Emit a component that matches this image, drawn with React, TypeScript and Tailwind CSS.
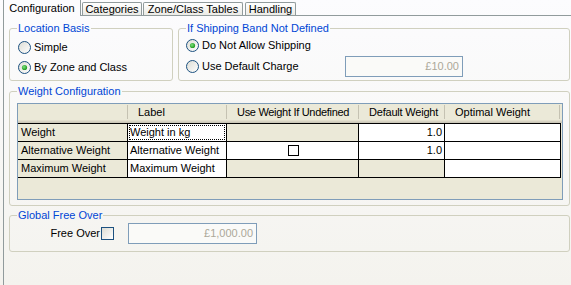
import { useId } from "react";

// XP style radio
function Radio({ checked }: { checked?: boolean }) {
  const id = useId();
  return (
    <svg width="13" height="13" viewBox="0 0 13 13" className="shrink-0">
      <defs>
        <linearGradient id={id + "bg"} x1="0" y1="0" x2="1" y2="1">
          <stop offset="0" stopColor="#dcdcd4" />
          <stop offset="1" stopColor="#ffffff" />
        </linearGradient>
        <radialGradient id={id + "dot"} cx="0.4" cy="0.4" r="0.6">
          <stop offset="0" stopColor="#7de07d" />
          <stop offset="1" stopColor="#1f9a1f" />
        </radialGradient>
      </defs>
      <circle cx="6.5" cy="6.5" r="6" fill={`url(#${id}bg)`} stroke="#1c5180" strokeWidth="1" />
      {checked && <circle cx="6.5" cy="6.5" r="2.6" fill={`url(#${id}dot)`} />}
    </svg>
  );
}

function Group({ title, className, children }: { title: string; className?: string; children: React.ReactNode }) {
  return (
    <fieldset className={`m-0 min-w-0 rounded-[3px] border border-[#d0d0bf] pl-[7px] ${className ?? ""}`}>
      <legend className="px-[1px] text-[#0046d5] leading-[13px]">{title}</legend>
      {children}
    </fieldset>
  );
}

function Disabled({ value, className }: { value: string; className?: string }) {
  return (
    <div className={`flex h-[21px] items-center justify-end border border-[#7f9db9] bg-[#fafaf8] pr-[3px] text-[#aca899] ${className ?? ""}`}>
      {value}
    </div>
  );
}

const cols = [
  { name: "", w: "w-[110px]", t: "" },
  { name: "Label", w: "w-[99px]", t: "" },
  { name: "Use Weight If Undefined", w: "w-[132px]", t: "tracking-[-0.3px]" },
  { name: "Default Weight", w: "w-[86px]", t: "tracking-[-0.2px]" },
  { name: "Optimal Weight", w: "w-[115px]", t: "" },
];

const white = "bg-white";
const gray = "bg-[#ebe9d8]";

export default function App() {
  return (
    <div className="h-[285px] w-[571px] overflow-hidden bg-gradient-to-b from-[#fcfcfe] to-[#f4f3ee] pl-[3px] font-['Liberation_Sans',Arial,sans-serif] text-[11px] leading-[13px] text-black">
      {/* Tabs */}
      <div className="flex h-[15px] items-start">
        <div className="relative z-10 flex h-[16px] w-[78px] items-center justify-center border-x border-[#919b9c] bg-[#fcfcfe] pt-[1px]">
          Configuration
        </div>
        <div className="ml-[1px] mt-[2px] flex h-[13px] w-[60px] items-center justify-center rounded-t-[2px] border-x border-t border-[#919b9c] bg-gradient-to-b from-white to-[#ecebe6]">
          Categories
        </div>
        <div className="ml-[1px] mt-[2px] flex h-[13px] w-[100px] items-center justify-center rounded-t-[2px] border-x border-t border-[#919b9c] bg-gradient-to-b from-white to-[#ecebe6]">
          Zone/Class Tables
        </div>
        <div className="ml-[2px] mt-[2px] flex h-[13px] w-[51px] items-center justify-center rounded-t-[2px] border-x border-t border-[#919b9c] bg-gradient-to-b from-white to-[#ecebe6]">
          Handling
        </div>
      </div>

      {/* Panel */}
      <div className="h-[270px] w-[590px] border-l border-t border-[#919b9c] px-[5px] pt-[6px]">
        <div className="flex w-[561px] gap-[5px]">
          <Group title="Location Basis" className="h-[59px] w-[164px]">
            <div className="flex flex-col gap-[7px] pl-[1px] pt-[6px]">
              <label className="flex items-center gap-[3px]">
                <Radio /> Simple
              </label>
              <label className="flex items-center gap-[3px]">
                <Radio checked /> By Zone and Class
              </label>
            </div>
          </Group>
          <Group title="If Shipping Band Not Defined" className="h-[59px] w-[392px]">
            <div className="flex flex-col pt-[4px]">
              <label className="flex h-[13px] items-center gap-[3px]">
                <Radio checked /> Do Not Allow Shipping
              </label>
              <div className="mt-[4px] flex items-center">
                <label className="flex w-[159px] items-center gap-[3px]">
                  <Radio /> Use Default Charge
                </label>
                <Disabled value="£10.00" className="w-[118px]" />
              </div>
            </div>
          </Group>
        </div>

        <Group title="Weight Configuration" className="mt-[4px] h-[121px] w-[561px] pl-[6px]">
          <div className="mt-[5px] h-[97px] w-[546px] border border-[#7f9db9] bg-[#ebe9d8]">
            <div className="flex h-[19px] pb-[3px] shadow-[inset_0_-1px_0_#cbc7b8,inset_0_-2px_0_#d6d2c2,inset_0_-3px_0_#e2decd]">
              {cols.map((c, i) => (
                <div key={i} className={`flex ${c.w} items-center justify-between overflow-hidden whitespace-nowrap`}>
                  <span className={`pl-[10px] ${c.t}`}>{c.name}</span>
                  <span className="h-[14px] w-px shrink-0 bg-[#c5c2b2] shadow-[1px_0_0_white]" />
                </div>
              ))}
            </div>
            <div className="grid w-[543px] grid-cols-[109px_98px_131px_85px_115px] grid-rows-[17px_17px_17px] gap-px border-y border-r border-black bg-black">
              <div className={`${gray} flex items-center pl-[3px]`}>Weight</div>
              <div className={`${white} p-[1px]`}>
                <div className="flex h-full items-center border border-dotted border-black">Weight in kg</div>
              </div>
              <div className={gray} />
              <div className={`${white} flex items-center justify-end pr-[2px]`}>1.0</div>
              <div className={white} />

              <div className={`${gray} flex items-center pl-[3px]`}>Alternative Weight</div>
              <div className={`${white} flex items-center pl-[2px]`}>Alternative Weight</div>
              <div className={`${white} flex items-center justify-center`}>
                <span className="ml-[1px] h-[11px] w-[11px] border border-black bg-white" />
              </div>
              <div className={`${white} flex items-center justify-end pr-[2px]`}>1.0</div>
              <div className={white} />

              <div className={`${gray} flex items-center pl-[3px]`}>Maximum Weight</div>
              <div className={`${white} flex items-center pl-[2px]`}>Maximum Weight</div>
              <div className={gray} />
              <div className={gray} />
              <div className={white} />
            </div>
          </div>
        </Group>

        <Group title="Global Free Over" className="mt-[3px] h-[43px] w-[561px]">
          <div className="flex h-[21px] items-center pl-[1px] pt-[1px]">
            <div className="w-[82px] text-right">Free Over</div>
            <span className="ml-[1px] h-[13px] w-[13px] border border-[#1c5180] bg-gradient-to-br from-[#dcdcd4] to-white" />
            <Disabled value="£1,000.00" className="ml-[14px] w-[129px]" />
          </div>
        </Group>
      </div>
    </div>
  );
}
